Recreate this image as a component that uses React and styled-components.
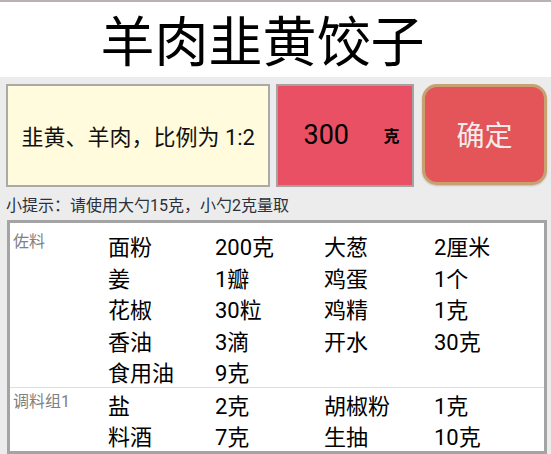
import React from "react";
import styled, { createGlobalStyle } from "styled-components";

const Global = createGlobalStyle`
  html, body { margin: 0; padding: 0; background: #ececec; overflow: hidden; }
  body { font-family: Roboto, "Noto Sans CJK SC", sans-serif; }
  * { box-sizing: border-box; }
`;

const Page = styled.div`
  width: 551px;
  height: 454px;
  display: flex;
  flex-direction: column;
  background: #ececec;
  border-top: 2px solid #b9b1b3;
`;

const Header = styled.header`
  height: 76px;
  background: #ffffff;
  display: flex;
  align-items: center;
  justify-content: center;
  padding-right: 26px;
`;

const Title = styled.h1`
  margin: 0;
  font-family: "Noto Sans CJK SC", sans-serif;
  font-weight: 400;
  font-size: 54px;
  line-height: 1;
  color: #000;
`;

const Toolbar = styled.div`
  display: flex;
  align-items: flex-start;
  padding: 7px 4px 0 6px;
`;

const InfoBox = styled.div`
  width: 265px;
  height: 103px;
  border: 2.5px solid #a9a9a9;
  background: #fffbdc;
  display: flex;
  align-items: center;
  justify-content: center;
  font-size: 22px;
  color: #111;
  font-family: Roboto, "Noto Sans CJK SC", sans-serif;
`;

const AmountBox = styled.div`
  width: 138px;
  height: 103px;
  margin-left: 6px;
  border: 2.5px solid #a3a3a3;
  background: #ea5063;
  display: flex;
  align-items: center;
  padding-left: 25px;
`;

const Amount = styled.span`
  font-size: 27px;
  color: #000;
  width: 80px;
`;

const Unit = styled.span`
  font-size: 16px;
  font-weight: 700;
  color: #000;
`;

const ConfirmButton = styled.button`
  width: 125px;
  height: 101px;
  margin-left: 8px;
  border: 3px solid #c9a06f;
  border-radius: 15px;
  background: #e35559;
  color: #f5ecec;
  font-family: "Noto Sans CJK SC", sans-serif;
  font-size: 28px;
  padding: 0;
  box-shadow: 0 1px 2px rgba(0, 0, 0, 0.2);
`;

const Hint = styled.p`
  margin: 0;
  padding: 8px 0 3px 6px;
  line-height: 22px;
  font-size: 16px;
  color: #2b303b;
`;

const TableBox = styled.div`
  margin: 0 4px 0 7px;
  border: 3px solid #a4a4a4;
  background: #ffffff;
  flex: 1;
`;

const Group = styled.section`
  display: flex;
  padding-top: ${(p) => p.$pad}px;
  border-top: ${(p) => (p.$divider ? "1px solid #dedede" : "none")};
`;

const GroupLabel = styled.div`
  width: 98px;
  flex-shrink: 0;
  padding: ${(p) => p.$offset}px 0 0 3px;
  font-size: 16px;
  line-height: 18px;
  color: #808080;
`;

const Items = styled.div`
  flex: 1;
  display: grid;
  grid-template-columns: 107px 109px 110px 1fr;
  grid-auto-rows: 31.5px;
  align-items: center;
  font-size: 22px;
  color: #000;
`;

const Cell = styled.span`
  white-space: nowrap;
`;

const groups = [
  {
    label: "佐料",
    pad: 7,
    offset: 3,
    items: [
      ["面粉", "200克"],
      ["大葱", "2厘米"],
      ["姜", "1瓣"],
      ["鸡蛋", "1个"],
      ["花椒", "30粒"],
      ["鸡精", "1克"],
      ["香油", "3滴"],
      ["开水", "30克"],
      ["食用油", "9克"],
    ],
  },
  {
    label: "调料组1",
    pad: 0,
    offset: 5,
    divider: true,
    items: [
      ["盐", "2克"],
      ["胡椒粉", "1克"],
      ["料酒", "7克"],
      ["生抽", "10克"],
    ],
  },
];

export default function App() {
  return (
    <>
      <Global />
      <Page>
        <Header>
          <Title>羊肉韭黄饺子</Title>
        </Header>
        <Toolbar>
          <InfoBox>韭黄、羊肉，比例为 1:2</InfoBox>
          <AmountBox>
            <Amount>300</Amount>
            <Unit>克</Unit>
          </AmountBox>
          <ConfirmButton>确定</ConfirmButton>
        </Toolbar>
        <Hint>小提示：请使用大勺15克，小勺2克量取</Hint>
        <TableBox>
          {groups.map((g) => (
            <Group key={g.label} $pad={g.pad} $divider={g.divider}>
              <GroupLabel $offset={g.offset}>{g.label}</GroupLabel>
              <Items>
                {g.items.map(([name, qty]) => (
                  <React.Fragment key={name}>
                    <Cell>{name}</Cell>
                    <Cell>{qty}</Cell>
                  </React.Fragment>
                ))}
              </Items>
            </Group>
          ))}
        </TableBox>
      </Page>
    </>
  );
}
